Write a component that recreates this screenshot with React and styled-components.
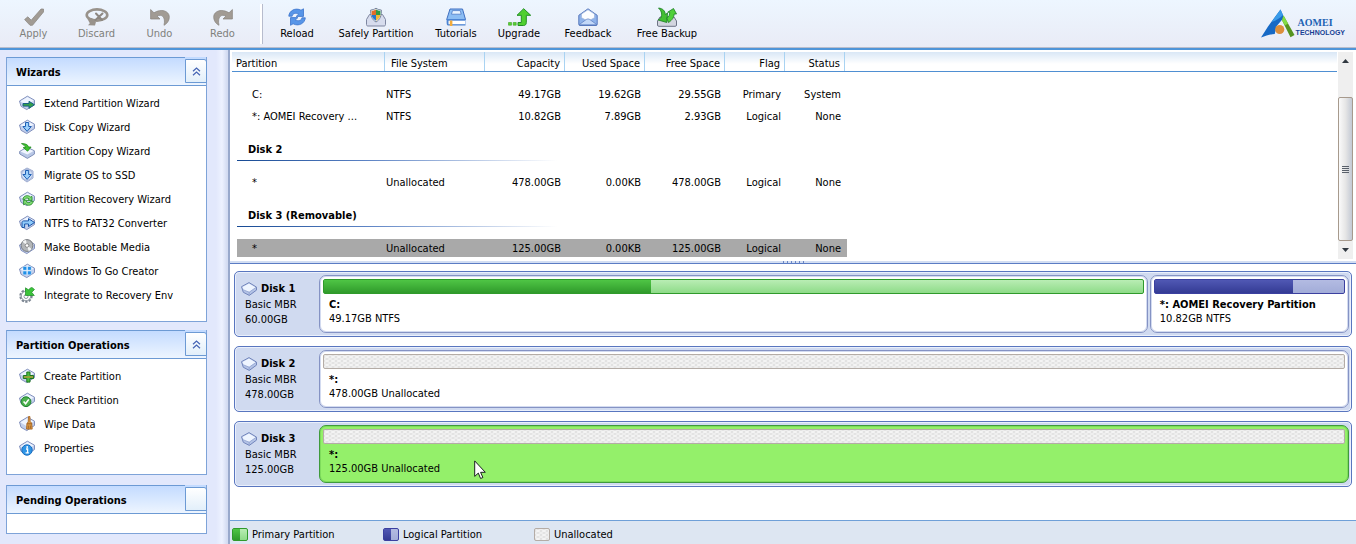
import styled, { createGlobalStyle } from "styled-components";

const tools = [
  { label: "Apply", icon: "apply", width: 63, disabled: true },
  { label: "Discard", icon: "discard", width: 63, disabled: true },
  { label: "Undo", icon: "undo", width: 63, disabled: true },
  { label: "Redo", icon: "redo", width: 63, disabled: true },
];

const links = [
  { label: "Reload", icon: "reload", width: 64 },
  { label: "Safely Partition", icon: "shield", width: 94 },
  { label: "Tutorials", icon: "book", width: 66 },
  { label: "Upgrade", icon: "upgrade", width: 60 },
  { label: "Feedback", icon: "mail", width: 78 },
  { label: "Free Backup", icon: "backup", width: 80 },
];

const wizards = [
  { label: "Extend Partition Wizard", icon: "extend" },
  { label: "Disk Copy Wizard", icon: "diskCopy" },
  { label: "Partition Copy Wizard", icon: "partCopy" },
  { label: "Migrate OS to SSD", icon: "migrate" },
  { label: "Partition Recovery Wizard", icon: "recovery" },
  { label: "NTFS to FAT32 Converter", icon: "convert" },
  { label: "Make Bootable Media", icon: "media" },
  { label: "Windows To Go Creator", icon: "windows" },
  { label: "Integrate to Recovery Env", icon: "integrate" },
];

const operations = [
  { label: "Create Partition", icon: "create" },
  { label: "Check Partition", icon: "check" },
  { label: "Wipe Data", icon: "wipe" },
  { label: "Properties", icon: "info" },
];

const columns = [
  "Partition",
  "File System",
  "Capacity",
  "Used Space",
  "Free Space",
  "Flag",
  "Status",
];

const rows = [
  { cells: ["C:", "NTFS", "49.17GB", "19.62GB", "29.55GB", "Primary", "System"] },
  { cells: ["*: AOMEI Recovery ...", "NTFS", "10.82GB", "7.89GB", "2.93GB", "Logical", "None"] },
  { group: "Disk 2" },
  { cells: ["*", "Unallocated", "478.00GB", "0.00KB", "478.00GB", "Logical", "None"] },
  { group: "Disk 3 (Removable)" },
  {
    cells: ["*", "Unallocated", "125.00GB", "0.00KB", "125.00GB", "Logical", "None"],
    selected: true,
  },
];

const disks = [
  {
    name: "Disk 1",
    size: "60.00GB",
    parts: [
      { name: "C:", info: "49.17GB NTFS", kind: "primary", grow: 820, used: 19.62, total: 49.17 },
      {
        name: "*: AOMEI Recovery Partition",
        info: "10.82GB NTFS",
        kind: "logical",
        grow: 191,
        used: 7.89,
        total: 10.82,
      },
    ],
  },
  {
    name: "Disk 2",
    size: "478.00GB",
    parts: [{ name: "*:", info: "478.00GB Unallocated", kind: "free", grow: 1 }],
  },
  {
    name: "Disk 3",
    size: "125.00GB",
    parts: [{ name: "*:", info: "125.00GB Unallocated", kind: "free", grow: 1, selected: true }],
  },
];

const legend = [
  { label: "Primary Partition", kind: "primary" },
  { label: "Logical Partition", kind: "logical" },
  { label: "Unallocated", kind: "free" },
];

const base = (
  <g strokeLinejoin="round">
    <path d="M.5 6 8.400 1.200l7.100 4v4.300L7.800 14.600 2 11.300z" fill="#c3d0ec" stroke="#8391bd" />
    <path d="M1.400 6.200 8.400 2l6.300 3.500-7 4.700z" fill="#eef4ff" />
  </g>
);

const downArrow = (
  <path d="M6.500 3.500h3.200v4h2.600L8.100 12.400 3.900 7.500h2.600z" fill="#9cd0fb" stroke="#1d5fb5" />
);

const sideIcons = {
  extend: (
    <>
      {base}
      <path d="M4 8.500h6V6.300l5.500 3.500-5.500 3.500v-2.200H4z" fill="#35a04a" stroke="#1a5f86" />
    </>
  ),
  diskCopy: (
    <>
      {base}
      {downArrow}
    </>
  ),
  partCopy: (
    <>
      <path d="M.6 8.500 8 4.200l7.400 3.600v3.300L8.400 15.400.8 11z" fill="#b9c8e6" stroke="#7f8fb8" />
      <path d="M1.400 8.600 8 5l6.600 3-6.200 3.600z" fill="#f0f5ff" />
      <path d="M2.500.6c4 0 6.300.8 7 3.400h2.600L8.600 8.200 4.200 4.600h2.300C6 3 4.600 1.600 2.500.6z" fill="#3fc02f" stroke="#1d8a1a" strokeWidth=".8" />
    </>
  ),
  migrate: (
    <>
      <path d="M2 4.500 8 1l6 3v7l-6 4-5-3.500z" fill="#d9e4f7" stroke="#9dabcf" />
      <circle cx="8" cy="7.800" r="5.500" fill="#d2e0f6" stroke="#a3b2d6" />
      {downArrow}
    </>
  ),
  recovery: (
    <>
      {base}
      <path d="M3.800 8.300C4.500 4.500 9 3.600 11.500 6l1.500-.6v4H9l1.200-1.500C8.600 6.600 6.600 7 6 8.500z" fill="#7fdd72" stroke="#1f8423" strokeWidth=".8" />
      <path d="M14.300 10.200c-.8 4.300-5.500 5.200-8 2.600l-1.700 1v-4.500h4l-1.200 1.600c1.500 1.300 3.800 1 4.600-.7z" fill="#7fdd72" stroke="#1f8423" strokeWidth=".8" />
    </>
  ),
  convert: (
    <>
      {base}
      <path d="M3 12.500V7.400c0-1 .6-1.500 1.500-1.500h5V3.600l6 3.900-6 4V9H5.600v3.500z" fill="#8fcbfa" stroke="#1b55a8" />
    </>
  ),
  media: (
    <>
      {base}
      <circle cx="8" cy="6.500" r="5.900" fill="#b3b6b8" stroke="#777b80" />
      <path d="M8 6.500 3.500 2.700A6 6 0 0 1 7 .9zM8 6.500l4.700 3.600a6 6 0 0 1-3 2.100z" fill="#f2f4f4" />
      <circle cx="8" cy="6.500" r="1.800" fill="#fff" stroke="#777" strokeWidth=".8" />
    </>
  ),
  windows: (
    <>
      {base}
      <path d="M4 3.500h3.700v3.700H4zM8.600 3.500h3.700v3.700H8.600zM4 8.100h3.700v3.700H4zM8.600 8.100h3.700v3.700H8.600z" fill="#1f8fe8" stroke="#fff" strokeWidth=".4" />
    </>
  ),
  integrate: (
    <>
      <circle cx="7" cy="9" r="5.700" fill="#eef1f5" stroke="#7b8591" strokeWidth="2" strokeDasharray="2.300 1.300" />
      <circle cx="7" cy="9" r="4.700" fill="#fff" stroke="#7b8591" strokeWidth=".8" />
      <circle cx="7" cy="9.500" r="2" fill="none" stroke="#8b95a1" />
      <path d="M15.500 2.500 12.700 5.300l2.600 3.200H6.500V.8l2.900 2L12.600.2z" fill="#3cc33a" stroke="#1c8b26" strokeWidth=".7" />
    </>
  ),
  create: (
    <>
      {base}
      <path d="M7.800 4h3.200v3.500h3.600v3H11v3.600H7.800v-3.600H4.300v-3h3.500z" fill="#4dbb3d" stroke="#1b7421" />
      <path d="M5 9h9" stroke="#e08a3a" strokeWidth="1" />
    </>
  ),
  check: (
    <>
      {base}
      <circle cx="7" cy="9.700" r="4.900" fill="#4bb04c" stroke="#1e8230" />
      <path d="m4.600 9.500 2 2.300 3.200-4.400" fill="none" stroke="#fff" strokeWidth="1.600" />
    </>
  ),
  wipe: (
    <>
      {base}
      <path d="M9.500.5h1.400l.3 5 1.500 1.600.5 6H7.500l.4-5.400 1.300-2z" fill="#dd9a45" stroke="#a3601c" strokeWidth=".8" />
      <path d="M7.800 7.800h5M9.300 9.500v3M11.300 9.500v3" stroke="#8a4f18" strokeWidth=".7" />
    </>
  ),
  info: (
    <>
      {base}
      <circle cx="8" cy="10" r="5.200" fill="#2f95e6" stroke="#1b6fc0" />
      <path d="M7 9h1.600v3.500M6.600 12.800h3.200" fill="none" stroke="#fff" strokeWidth="1.300" />
      <circle cx="8.200" cy="7" r=".9" fill="#fff" />
    </>
  ),
};

const dull = { fill: "#a19b94", stroke: "#87827d", strokeWidth: 0.7, strokeLinejoin: "round" };

const toolIcons = {
  apply: <path {...dull} d="M.6 11.500 3.800 8.800l3.400 3.400L17 1h2.500v3L8.500 17.300H6z" />,
  discard: (
    <>
      <ellipse cx="10" cy="7" rx="10.300" ry="5.600" fill="none" stroke="#98928b" strokeWidth="2.600" />
      <path d="m.5 11 4-1 4.500 3.800-1 3.700-7-.2 1.800-2z" fill="#98928b" />
      <path d="m9 5.500 6 6.500m.5-6.500L8.500 12" stroke="#8d8781" strokeWidth="2" strokeLinecap="round" />
    </>
  ),
  undo: <path {...dull} d="M.6 1.500V11H10L7.200 8.200c4-2.500 8.800.3 6.800 9.100 4-2.300 5.300-5.300 5.300-8.800C18.800 2.800 11 .3 4 4.800z" />,
  redo: <path {...dull} d="M19.400 1.500V11H10l2.800-2.800C8.800 5.700 4 8.500 6 17.300 2 15 .7 12 .7 8.500 1.200 2.800 9 .3 16 4.800z" />,
  reload: (
    <g fill="#5795e8" stroke="#3b74cc" strokeWidth=".8">
      <path d="M1.800 8.200C2.200 2.500 8.500-.7 14 2.200L16.500.8v7.600H9.200l2.500-2.300C8.500 4.500 5.500 5.500 5.200 8.200z" />
      <path d="M18.300 9.800c-.4 5.700-6.700 8.900-12.200 6L3.500 17.300V9.600h7.400L8.300 12c3.300 1.500 6.200.6 6.600-2.200z" />
    </g>
  ),
  shield: (
    <>
      <path d="M3.500 6.500h13l3 5v5c0 1-.6 1.500-1.500 1.500H2c-1 0-1.500-.5-1.500-1.500v-5z" fill="#d7dced" stroke="#7e86a0" />
      <path d="M10 .2c2 1.300 3.600 1.700 5.300 1.800.3 5.500-1 9.500-5.300 12-4.300-2.500-5.600-6.500-5.300-12C6.400 1.900 8 1.500 10 .2z" fill="#eef1f6" stroke="#76849b" />
      <path d="M10 1.500V7H5.600V2.900c1.700-.1 3-.6 4.400-1.400z" fill="#df6d2a" />
      <path d="M10 1.500V7h4.400V2.900c-1.700-.1-3-.6-4.400-1.400z" fill="#2f9b45" />
      <path d="M10 12.700V7H5.600c.4 2.500 1.900 4.400 4.400 5.700z" fill="#2476cf" />
      <path d="M10 12.700V7h4.400c-.4 2.500-1.900 4.400-4.400 5.700z" fill="#f2b838" />
    </>
  ),
  book: (
    <>
      <path d="M4 1h12.500l3 10.500H.7z" fill="#8cbdf3" stroke="#3f6fc0" />
      <path d="M6.500 2.600h7.700l1 3.600H5.500z" fill="#eaf4ff" stroke="#3f6fc0" strokeWidth=".7" />
      <path d="M.7 11h18.800v6.500H2c-1.500 0-1.500-3.500-1.300-6.500z" fill="#4c84d4" />
      <path d="M2.500 12.700h16.800v3.500H2.500z" fill="#fff" />
      <path d="M3.800 12.500h2.600V18H3.800z" fill="#f2ab3c" />
    </>
  ),
  upgrade: (
    <>
      <path d="M-.5 14.500h3v2.700h-3zM4.200 14.500h3v2.700h-3z" fill="#58d033" stroke="#3aa31f" strokeWidth=".6" />
      <path d="M9 17.500v-3h3.300V7.300H8L14.700.7l7 6.600h-4.400v7.200c0 2-1 3-2.800 3z" fill="#50cf2f" stroke="#238f24" />
    </>
  ),
  mail: (
    <>
      <path d="M.8 7.300 10 .8l9.200 6.500v9c0 .7-.4 1.200-1.200 1.200H2c-.8 0-1.200-.5-1.200-1.200z" fill="#8eb2ea" stroke="#5878bd" />
      <path d="M3.500 6 10 1.700 16.500 6v3.700L10 13.300 3.500 9.700z" fill="#fcfdff" stroke="#9db3da" strokeWidth=".7" />
      <path d="m1 16.800 7.200-5.300c1-.7 2.600-.7 3.600 0l7.200 5.300z" fill="#c3d8f8" stroke="#5878bd" strokeWidth=".7" />
    </>
  ),
  backup: (
    <>
      <path d="M3 9h14l2.500 4v4c0 .9-.5 1.300-1.300 1.300H1.800c-.8 0-1.300-.4-1.300-1.300v-4z" fill="#d2d5df" stroke="#6d7386" />
      <path d="M1.500 0C6 .5 8.200 3 8.300 6.500L10.500 5l-.7 9.500L1.200 12l2.500-2C5.500 6.500 4.700 3.300 1.500 0z" fill="#43bf33" stroke="#197b22" strokeWidth=".8" />
      <path d="M16.500.5 19.500 6h-2.300c-.3 3.300-1.800 6-5.700 8.500l-1.800-4.700c2.400-1 3-3 3-5.600h-2z" fill="#4fd03a" stroke="#197b22" strokeWidth=".8" />
    </>
  ),
};

function DiskIcon() {
  return (
    <svg width="16" height="14" viewBox="0 0 16 14" aria-hidden="true">
      <path d="M.5 4.700 8 .6l7.500 4.500v3L8.300 13.400 2.300 10.300z" fill="#b4c3e6" stroke="#7285bb" strokeLinejoin="round" />
      <path d="m1.400 4.900 6.600-3.500 6.700 4-6.600 4.700-5.300-2.200z" fill="#eff5ff" />
      <path d="M8.200 10.200v2.500M2.300 7.800l5.900 2.400 6.800-4.800" fill="none" stroke="#8a9ccb" strokeWidth=".7" />
    </svg>
  );
}

function Logo() {
  return (
    <svg width="34" height="29" viewBox="0 0 34 29" aria-hidden="true">
      <path d="M19.500.5 7 17.500 0 28.500c5-1.800 9.300-3.100 13.700-3.500l2-8L23 8.500z" fill="#1769c5" />
      <path d="M19.500.5 10.500 13c5-1.500 8.500-4 11.500-7z" fill="#399be9" />
      <path d="M22.500 6.500 33.500 26l-4 2.200-8.500-17z" fill="#55931f" />
      <path d="m22.500 6.500 4.500 8-3 2-3-5.300z" fill="#82dc45" />
      <circle cx="18.700" cy="20.500" r="4.600" fill="#dc8f3c" />
    </svg>
  );
}

function Panel({ title, items = [], toggle = true }) {
  return (
    <PanelBox>
      <PanelHeader>
        <PanelTitle>{title}</PanelTitle>
        <Toggle type="button" aria-label={`Collapse ${title}`}>
          {toggle && (
            <svg width="9" height="9" viewBox="0 0 9 9" aria-hidden="true">
              <path d="M1 4.300 4.500 1 8 4.300M1 8.300 4.500 5 8 8.300" fill="none" stroke="#4564b4" strokeWidth="1.200" />
            </svg>
          )}
        </Toggle>
      </PanelHeader>
      <PanelBody>
        {items.map((item) => (
          <li key={item.label}>
            <PanelLink href="#">
              <svg width="16" height="16" viewBox="0 0 16 16" aria-hidden="true">
                {sideIcons[item.icon]}
              </svg>
              {item.label}
            </PanelLink>
          </li>
        ))}
      </PanelBody>
    </PanelBox>
  );
}

function Tool({ label, icon, width, disabled }) {
  return (
    <ToolButton type="button" $width={width} disabled={disabled}>
      <svg width="20" height="18" viewBox="0 0 20 18" overflow="visible" aria-hidden="true">
        {toolIcons[icon]}
      </svg>
      {label}
    </ToolButton>
  );
}

function PartitionBox({ part }) {
  return (
    <Part $grow={part.grow} $selected={part.selected}>
      <Bar $kind={part.kind}>
        {part.used && <Used $kind={part.kind} style={{ width: `${(part.used / part.total) * 100}%` }} />}
      </Bar>
      <PartText>
        <strong>{part.name}</strong>
        <span>{part.info}</span>
      </PartText>
      {part.selected && (
        <Pointer width="12" height="20" viewBox="0 0 12 20" aria-hidden="true">
          <path d="M.7.9v15.500l3.600-3.300 2.300 5.400 2.300-1-2.300-5.200h4.700z" fill="#fff" stroke="#1a2020" />
        </Pointer>
      )}
    </Part>
  );
}

export default function App() {
  return (
    <>
      <GlobalStyle />
      <Window>
        <Toolbar>
          {tools.map((tool) => (
            <Tool key={tool.label} {...tool} />
          ))}
          <Divider />
          {links.map((tool) => (
            <Tool key={tool.label} {...tool} />
          ))}
          <Brand href="#">
            <Logo />
            <BrandText>
              <BrandName>AOMEI</BrandName>
              <BrandSub>TECHNOLOGY</BrandSub>
            </BrandText>
          </Brand>
        </Toolbar>

        <Content>
          <Sidebar>
            <Panel title="Wizards" items={wizards} />
            <Panel title="Partition Operations" items={operations} />
            <Panel title="Pending Operations" toggle={false} />
          </Sidebar>

          <Main>
            <ListArea>
              <Table>
                <thead>
                  <HeadRow>
                    {columns.map((name, i) => (
                      <HeadCell key={name} $right={i > 1}>
                        {name}
                      </HeadCell>
                    ))}
                  </HeadRow>
                </thead>
                <TableBody>
                  {rows.map((row, i) =>
                    row.group ? (
                      <GroupRow key={row.group}>
                        <th colSpan={7}>{row.group}</th>
                      </GroupRow>
                    ) : (
                      <Row key={i} $selected={row.selected}>
                        {row.cells.map((cell, j) => (
                          <Cell key={j} $right={j > 1}>
                            {cell}
                          </Cell>
                        ))}
                      </Row>
                    )
                  )}
                </TableBody>
              </Table>
              <Scrollbar>
                <ScrollButton type="button" aria-label="Scroll up">
                  <svg width="7" height="4" viewBox="0 0 7 4">
                    <path d="M0 4 3.500 0 7 4z" fill="#303840" />
                  </svg>
                </ScrollButton>
                <Thumb>
                  <i />
                  <i />
                  <i />
                  <i />
                </Thumb>
                <ScrollButton type="button" aria-label="Scroll down">
                  <svg width="7" height="4" viewBox="0 0 7 4">
                    <path d="M0 0h7L3.500 4z" fill="#303840" />
                  </svg>
                </ScrollButton>
              </Scrollbar>
            </ListArea>
            <Splitter>
              {[0, 1, 2, 3, 4, 5].map((n) => (
                <i key={n} />
              ))}
            </Splitter>

            <DiskArea>
              {disks.map((disk) => (
                <Disk key={disk.name}>
                  <DiskInfo>
                    <DiskName>
                      <DiskIcon />
                      {disk.name}
                    </DiskName>
                    <span>Basic MBR</span>
                    <span>{disk.size}</span>
                  </DiskInfo>
                  <Parts>
                    {disk.parts.map((part) => (
                      <PartitionBox key={part.name} part={part} />
                    ))}
                  </Parts>
                </Disk>
              ))}
            </DiskArea>

            <Legend>
              {legend.map((item) => (
                <LegendItem key={item.label}>
                  <Swatch $kind={item.kind} />
                  {item.label}
                </LegendItem>
              ))}
            </Legend>
          </Main>
        </Content>
      </Window>
    </>
  );
}

const kinds = {
  primary: {
    border: "#2f9a2b",
    light: "linear-gradient(#b9edb4, #8edb88)",
    dark: "linear-gradient(#4fc545, #2f9a2b)",
  },
  logical: {
    border: "#3b40a0",
    light: "linear-gradient(#b3bbe2, #a2acd8)",
    dark: "linear-gradient(#5058b4, #343b94)",
  },
  free: {
    border: "#b4aca6",
    light:
      "radial-gradient(#f4f4f4 35%, transparent 60%) 0 0 / 6px 4px, radial-gradient(#efefef 35%, transparent 60%) 3px 2px / 6px 4px, #dedede",
    dark: "none",
  },
};

const GlobalStyle = createGlobalStyle`
  * {
    box-sizing: border-box;
  }
  body {
    margin: 0;
    color: #000;
    font-family: Tahoma, "DejaVu Sans Condensed", "DejaVu Sans", sans-serif;
    font-size: 11px;
    line-height: 15px;
  }
  button {
    font: inherit;
    color: inherit;
  }
  svg {
    display: block;
    flex: none;
  }
`;

const Window = styled.div`
  display: flex;
  flex-direction: column;
  min-height: 100vh;
  background: #fff;
`;

const Toolbar = styled.header`
  display: flex;
  height: 50px;
  padding-left: 2px;
  background: linear-gradient(#edf6ff, #e9ebf6);
  border-bottom: 2px solid #4f94d8;
  box-shadow: inset 0 -1px #b9bdcc;
`;

const ToolButton = styled.button`
  display: flex;
  flex-direction: column;
  align-items: center;
  width: ${(p) => p.$width}px;
  padding: 8px 0 0;
  border: 0;
  background: none;
  white-space: nowrap;

  &:disabled {
    color: #7f817c;
  }
`;

const Divider = styled.div`
  width: 3px;
  height: 40px;
  margin: 4px 2px 0 6px;
  background: #fff;
  border-right: 1px solid #b7bccd;
`;

const Brand = styled.a`
  display: flex;
  gap: 1px;
  margin-left: auto;
  padding: 9px 11px 0 0;
  text-decoration: none;
`;

const BrandText = styled.span`
  display: flex;
  flex-direction: column;
  padding-top: 8px;
`;

const BrandName = styled.span`
  padding-left: 2px;
  color: #1d62b4;
  font: bold 10px/11px "Liberation Serif", serif;
`;

const BrandSub = styled.span`
  color: #173f94;
  font: bold 7px/10px "Liberation Sans", sans-serif;
`;

const Content = styled.div`
  display: flex;
  flex: 1;
`;

const Sidebar = styled.aside`
  display: flex;
  flex-direction: column;
  gap: 8px;
  width: 230px;
  flex: none;
  padding: 7px 21px 10px 6px;
  background: linear-gradient(90deg, #e2e8fc 216px, #edf2ff 222px, #d3dcf2 227px);
  border-right: 2px solid #98a9cc;
`;

const PanelBox = styled.section`
  background: #fff;
  border: solid #7ea3d8;
  border-width: 0 1px 1px;

  &:last-child {
    margin-top: 2px;
  }
`;

const PanelHeader = styled.div`
  display: flex;
  height: 29px;
  background: linear-gradient(#c2daff, #edf5ff);
  border-bottom: 1px solid #6c9ad4;
`;

const PanelTitle = styled.h2`
  flex: 1;
  margin: 0;
  padding: 7px 9px 0;
  border-top: 1px solid #6c9ad4;
  font-size: 11px;
  line-height: 15px;
`;

const Toggle = styled.button`
  display: grid;
  place-items: center;
  width: 22px;
  height: 24px;
  margin: 2px -1px 0 0;
  padding: 0;
  border: 1px solid #6c9ad4;
  border-radius: 0 3px 0 0;
  background: linear-gradient(#fff, #e2effa);
`;

const PanelBody = styled.ul`
  min-height: 19px;
  margin: 0;
  padding: 0;
  list-style: none;

  &:not(:empty) {
    padding: 5px 0 14px 12px;
  }
`;

const PanelLink = styled.a`
  display: flex;
  align-items: center;
  gap: 9px;
  height: 24px;
  color: #000;
  text-decoration: none;
`;

const Main = styled.main`
  display: flex;
  flex: 1;
  flex-direction: column;
  min-width: 0;
`;

const ListArea = styled.div`
  display: flex;
  padding: 2px 3px 2px 2px;
`;

const Table = styled.table`
  display: block;
  flex: 1;
  margin-right: 1px;

  thead {
    display: block;
  }
`;

const HeadRow = styled.tr`
  display: grid;
  grid-template-columns: 153px 100px 80px 80px 80px 60px 60px;
  height: 20px;
  background: linear-gradient(#d9e7f6, #fff 12px);
  border-bottom: 1px solid #4f8fd2;
`;

const HeadCell = styled.th`
  padding: 5px 4px 0;
  border-right: 1px solid #a9d3f2;
  font-weight: normal;
  line-height: 14px;
  text-align: ${(p) => (p.$right ? "right" : "left")};

  &:nth-child(2) {
    padding-left: 6px;
  }
`;

const TableBody = styled.tbody`
  display: block;
  padding: 11px 0 0 5px;
`;

const Row = styled.tr`
  display: grid;
  grid-template-columns: 149px 100px 75px 80px 80px 60px 60px;
  align-items: center;
  width: 610px;
  height: 18px;
  margin: 2px 0;
  background: ${(p) => (p.$selected ? "#a9a9a9" : "none")};

  & + & {
    margin-top: 4px;
  }
`;

const Cell = styled.td`
  padding: 0;
  white-space: nowrap;
  text-align: ${(p) => (p.$right ? "right" : "left")};

  &:first-child {
    padding-left: 15px;
  }
`;

const GroupRow = styled.tr`
  display: block;
  height: 44px;

  th {
    display: block;
    width: 320px;
    height: 34px;
    padding: 15px 11px 0;
    background: linear-gradient(90deg, #174a94, #5b82c4 40%, #fff) bottom / 100% 1px no-repeat;
    text-align: left;
  }
`;

const Scrollbar = styled.div`
  display: flex;
  flex-direction: column;
  width: 15px;
  background: #efefef;
`;

const ScrollButton = styled.button`
  display: grid;
  place-items: center;
  height: 18px;
  padding: 0;
  border: 0;
  background: none;
`;

const Thumb = styled.div`
  display: flex;
  flex: 1;
  flex-direction: column;
  align-items: center;
  justify-content: center;
  gap: 1px;
  margin-top: 27px;
  border: 1px solid #a79a8d;
  border-radius: 2px;
  background: linear-gradient(90deg, #fafafa, #e6e6e6 50%, #c3c9d4);

  i {
    width: 7px;
    height: 1px;
    background: #59606a;
  }
`;

const Splitter = styled.div`
  display: flex;
  justify-content: center;
  gap: 3px;
  height: 3px;
  background: #d3def2;
  border-bottom: 1px solid #5b7cc4;

  i {
    width: 1px;
    background: #6b86c4;
  }
`;

const DiskArea = styled.div`
  display: flex;
  flex: 1;
  flex-direction: column;
  gap: 9px;
  padding: 7px 4px 9px;
`;

const Disk = styled.section`
  display: flex;
  height: 66px;
  padding: 3px 2px 3px 0;
  background: #d0daf0;
  border: 1px solid #5976bf;
  border-radius: 5px;
  box-shadow: inset 0 0 0 1px #eaf0fc;
`;

const DiskInfo = styled.div`
  display: flex;
  flex-direction: column;
  width: 84px;
  flex: none;
  padding: 6px 0 0 6px;

  span {
    padding-left: 4px;
  }
`;

const DiskName = styled.h3`
  display: flex;
  align-items: center;
  gap: 4px;
  margin: 0;
  font-size: 11px;
  line-height: 16px;
`;

const Parts = styled.div`
  display: flex;
  flex: 1;
  gap: 2px;
`;

const Part = styled.div`
  position: relative;
  flex: ${(p) => p.$grow} 1 0;
  min-width: 0;
  padding: 3px;
  background: ${(p) => (p.$selected ? "#94f06a" : "#fff")};
  border: 1px solid ${(p) => (p.$selected ? "#3f9a3c" : "#8593c4")};
  border-radius: 7px;
  box-shadow: inset 0 0 0 1px ${(p) => (p.$selected ? "#7fdc5c" : "#d3dbf0")};
`;

const Bar = styled.div`
  height: 15px;
  border: 1px solid ${(p) => kinds[p.$kind].border};
  border-radius: 2px;
  background: ${(p) => kinds[p.$kind].light};
`;

const Used = styled.div`
  height: 100%;
  background: ${(p) => kinds[p.$kind].dark};
`;

const PartText = styled.div`
  display: flex;
  flex-direction: column;
  padding: 4px 6px 0;
  line-height: 14px;
`;

const Pointer = styled.svg`
  position: absolute;
  top: 34px;
  left: 154px;
`;

const Legend = styled.footer`
  display: flex;
  height: 24px;
  padding-left: 2px;
  background: #dde6f2;
  border-top: 1px solid #6fa0d8;
`;

const LegendItem = styled.div`
  display: flex;
  align-items: center;
  gap: 4px;
  width: 151px;
  padding-top: 3px;
`;

const Swatch = styled.i`
  width: 16px;
  height: 13px;
  border: 1px solid ${(p) => kinds[p.$kind].border};
  border-radius: 2px;
  background: ${(p) => kinds[p.$kind].light};

  &::before {
    content: "";
    display: block;
    width: 7px;
    height: 100%;
    background: ${(p) => kinds[p.$kind].dark};
  }
`;
